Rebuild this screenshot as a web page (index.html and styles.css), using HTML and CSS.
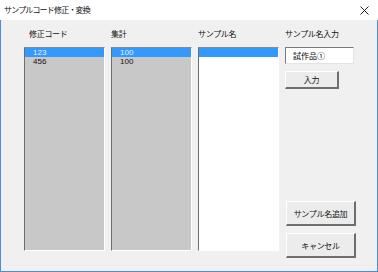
FILE: index.html
```html
<!DOCTYPE html>
<html lang="ja">
<head>
<meta charset="utf-8">
<link rel="stylesheet" href="styles.css">
</head>
<body>
<div class="window">
  <div class="titlebar">
    <span class="title">サンプルコード修正・変換</span>
    <svg class="close" width="9" height="9" viewBox="0 0 9 9"><path d="M0.5 0.5 L8.5 8.5 M8.5 0.5 L0.5 8.5" stroke="#222" stroke-width="1" fill="none"/></svg>
  </div>
  <div class="client">
    <div class="grid">
      <div class="label first">修正コード</div>
      <div class="label">集計</div>
      <div class="label">サンプル名</div>
      <div class="label">サンプル名入力</div>
      <div class="list gray">
        <div class="item sel">123</div>
        <div class="item">456</div>
      </div>
      <div class="list gray">
        <div class="item sel">100</div>
        <div class="item">100</div>
      </div>
      <div class="list white">
        <div class="item sel"></div>
      </div>
      <div class="side">
        <div class="textbox">試作品①</div>
        <div class="btn small">入力</div>
        <div class="spacer"></div>
        <div class="btn big">サンプル名追加</div>
        <div class="btn big">キャンセル</div>
      </div>
    </div>
  </div>
</div>
</body>
</html>
```
FILE: styles.css
```css
html, body {
  margin: 0;
  padding: 0;
  background: #f0f0f0;
}
body {
  font-family: "Noto Sans CJK JP", "Noto Sans", sans-serif;
  font-size: 8px;
  color: #000;
}
.window {
  width: 378px;
  height: 272px;
  display: flex;
  flex-direction: column;
}
.titlebar {
  height: 20px;
  background: #fff;
  display: flex;
  align-items: center;
  justify-content: space-between;
  padding: 0 9px 0 4px;
}
.title {
  font-size: 8px;
  letter-spacing: -0.8px;
  line-height: 10px;
  color: #111;
}
.close {
  display: block;
}
.client {
  flex: 1;
  border: 1px solid #4a8fd6;
  border-top: none;
  background: #f0f0f0;
  padding: 9px 0 0 23px;
}
.grid {
  display: grid;
  grid-template-columns: 81px 81px 81px 71px;
  grid-template-rows: 10px auto;
  column-gap: 6px;
  row-gap: 8px;
  align-items: start;
}
.label {
  line-height: 10px;
  font-size: 8px;
  letter-spacing: -0.3px;
  color: #111;
}
.label.first {
  padding-left: 5px;
}
.list {
  height: 204px;
  box-sizing: border-box;
  border-style: solid;
  border-width: 1px;
  border-color: #8a8a8a #ffffff #ffffff #6e6e6e;
}
.list.gray {
  background: #c8c8c8;
}
.list.white {
  background: #fff;
}
.item {
  height: 9px;
  line-height: 9px;
  padding-left: 8px;
  font-family: "Liberation Sans", Arial, sans-serif;
  font-size: 8px;
  color: #111;
}
.item.sel {
  background: #3399ff;
  color: #e8f2ff;
}
.side {
  display: flex;
  flex-direction: column;
  height: 211px;
}
.textbox {
  width: 69px;
  height: 17px;
  box-sizing: border-box;
  background: #fff;
  border-style: solid;
  border-width: 1px;
  border-color: #7a7a7a #e3e3e3 #e3e3e3 #7a7a7a;
  padding-left: 7px;
  line-height: 15px;
  font-size: 8px;
}
.btn {
  box-sizing: border-box;
  background: #ececec;
  border-style: solid;
  border-width: 1px 2px 2px 1px;
  border-color: #ffffff #6e6e6e #6e6e6e #ffffff;
  display: flex;
  align-items: center;
  justify-content: center;
  font-size: 8px;
  letter-spacing: -0.3px;
  color: #111;
}
.btn.small {
  width: 54px;
  height: 18px;
  margin-top: 7px;
}
.spacer {
  flex: 1;
}
.btn.big {
  width: 70px;
  height: 25px;
  margin-left: 1px;
}
.btn.big + .btn.big {
  margin-top: 7px;
}
```
